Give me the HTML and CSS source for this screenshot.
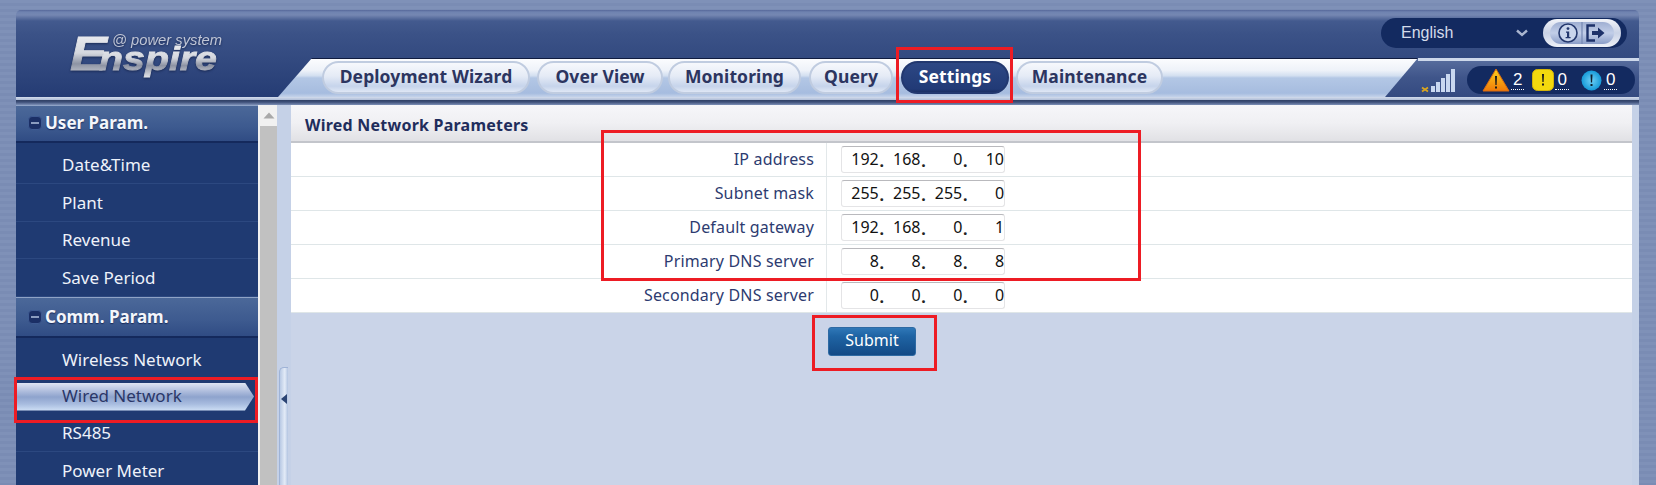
FILE: index.html
```html
<!DOCTYPE html>
<html lang="en">
<head>
<meta charset="utf-8">
<title>Wired Network Parameters</title>
<link rel="stylesheet" href="styles.css">
</head>
<body>
<div class="page">
  <div class="frame">
    <header class="top">
      <svg class="logo" width="170" height="54" viewBox="0 0 170 54">
        <defs>
          <linearGradient id="lg" x1="0" y1="0" x2="0" y2="1">
            <stop offset="0" stop-color="#f4f5f8"/>
            <stop offset="0.5" stop-color="#d4d7de"/>
            <stop offset="0.7" stop-color="#8d93a3"/>
            <stop offset="1" stop-color="#dfe1e6"/>
          </linearGradient>
        </defs>
        <text x="2" y="42" class="logo-e" fill="url(#lg)" stroke="url(#lg)" textLength="37" lengthAdjust="spacingAndGlyphs">E</text>
        <text x="31" y="42" class="logo-n" fill="url(#lg)" stroke="url(#lg)" textLength="118" lengthAdjust="spacingAndGlyphs">nspire</text>
        <text x="44" y="17" class="logo-s" textLength="110" lengthAdjust="spacingAndGlyphs">@ power system</text>
      </svg>
      <div class="lang">
        <span class="lang-name">English</span>
        <svg class="chev" width="12" height="8" viewBox="0 0 12 8"><path d="M1 1.5 L6 6 L11 1.5" fill="none" stroke="#a9b5cf" stroke-width="2.4"/></svg>
        <div class="tools">
          <svg width="78" height="28" viewBox="0 0 78 28">
            <defs>
              <linearGradient id="tg" x1="0" y1="0" x2="0" y2="1">
                <stop offset="0" stop-color="#9fafd2"/>
                <stop offset="0.5" stop-color="#c2cee8"/>
                <stop offset="1" stop-color="#8b9ec8"/>
              </linearGradient>
            </defs>
            <rect x="7" y="3" width="64" height="22" rx="11" fill="url(#tg)"/>
            <path d="M39 3V25" stroke="#7688b3" stroke-width="1.2"/>
            <circle cx="25" cy="14" r="9" fill="#c9d5ec" stroke="#24386e" stroke-width="1.6"/>
            <circle cx="25" cy="9.600" r="1.4" fill="#24386e"/>
            <path d="M23 12.5h3.2V18h1.4v1.2h-5V18h1.4v-4.300h-1z" fill="#24386e"/>
            <path d="M52 6.500h-7.500v15H52" fill="none" stroke="#1d3169" stroke-width="2.4"/>
            <path d="M49 12h6V8.500l6.500 5.500-6.500 5.500V16h-6z" fill="#1d3169"/>
          </svg>
        </div>
      </div>
    </header>

    <div class="navrow">
      <nav class="band">
        <a class="tab t1">Deployment Wizard</a>
        <a class="tab t2">Over View</a>
        <a class="tab t3">Monitoring</a>
        <a class="tab t4">Query</a>
        <a class="tab t5 on">Settings</a>
        <a class="tab t6">Maintenance</a>
      </nav>
      <div class="status">
        <svg class="signal" width="35" height="24" viewBox="0 0 35 24">
          <path d="M1 18.500l6 4M7 18.500l-6 4" stroke="#d9a520" stroke-width="1.800"/>
          <rect x="10" y="17" width="4" height="6" fill="#c9d8f0"/>
          <rect x="15" y="13" width="4" height="10" fill="#c9d8f0"/>
          <rect x="20" y="9" width="4" height="14" fill="#c9d8f0"/>
          <rect x="25" y="5" width="4" height="18" fill="#c9d8f0"/>
          <rect x="30" y="0" width="4" height="23" fill="#c9d8f0"/>
        </svg>
        <div class="alarms">
          <svg width="28" height="24" viewBox="0 0 28 24">
            <defs>
              <linearGradient id="wg" x1="0" y1="0" x2="0" y2="1">
                <stop offset="0" stop-color="#ffd21c"/>
                <stop offset="1" stop-color="#f07a08"/>
              </linearGradient>
            </defs>
            <path d="M14 1 L27 23 H1 Z" fill="url(#wg)" stroke="#d96a10" stroke-linejoin="round"/>
            <path d="M13 8h2l-.4 9h-1.200zM13 18.500h2v2h-2z" fill="#1a1a1a"/>
          </svg>
          <span class="count c1">2</span>
          <svg width="22" height="22" viewBox="0 0 22 22">
            <rect x="0.500" y="0.500" width="21" height="21" rx="5" fill="#f3d90e" stroke="#d3b30a"/>
            <path d="M10 5h2l-.4 8h-1.200zM10 14.500h2v2h-2z" fill="#1a1a1a"/>
          </svg>
          <span class="count c2">0</span>
          <svg width="21" height="21" viewBox="0 0 21 21">
            <defs>
              <radialGradient id="bg"><stop offset="0" stop-color="#6fd0f7"/><stop offset="1" stop-color="#159ad8"/></radialGradient>
            </defs>
            <circle cx="10.500" cy="10.500" r="10" fill="url(#bg)"/>
            <path d="M9.500 4.500h2l-.4 8H9.900zM9.500 14h2v2h-2z" fill="#10202f"/>
          </svg>
          <span class="count c3">0</span>
        </div>
      </div>
    </div>
    <div class="sep"></div>

    <div class="body">
      <aside class="side">
        <div class="group"><i class="minus"></i>User Param.</div>
        <a class="item first">Date&amp;Time</a>
        <a class="item">Plant</a>
        <a class="item">Revenue</a>
        <a class="item">Save Period</a>
        <div class="group g2"><i class="minus"></i>Comm. Param.</div>
        <a class="item first">Wireless Network</a>
        <a class="item sel"><span class="pill">Wired Network</span></a>
        <a class="item">RS485</a>
        <a class="item">Power Meter</a>
      </aside>
      <div class="scroll">
        <div class="scroll-btn"><svg width="12" height="7" viewBox="0 0 12 7"><path d="M6 0.500L11.500 6.500H0.500Z" fill="#a9a9a9"/></svg></div>
        <div class="scroll-thumb"></div>
      </div>
      <div class="split">
        <div class="handle"><svg width="6" height="10" viewBox="0 0 6 10"><path d="M0 5L6 0V10Z" fill="#2b4474"/></svg></div>
      </div>
      <main class="main">
        <h1 class="title">Wired Network Parameters</h1>
        <div class="rows">
          <div class="row"><label>IP address</label><div class="val"><div class="ip"><span>192</span><b>.</b><span>168</span><b>.</b><span>0</span><b>.</b><span>10</span></div></div></div>
          <div class="row"><label>Subnet mask</label><div class="val"><div class="ip"><span>255</span><b>.</b><span>255</span><b>.</b><span>255</span><b>.</b><span>0</span></div></div></div>
          <div class="row"><label>Default gateway</label><div class="val"><div class="ip"><span>192</span><b>.</b><span>168</span><b>.</b><span>0</span><b>.</b><span>1</span></div></div></div>
          <div class="row"><label>Primary DNS server</label><div class="val"><div class="ip"><span>8</span><b>.</b><span>8</span><b>.</b><span>8</span><b>.</b><span>8</span></div></div></div>
          <div class="row"><label>Secondary DNS server</label><div class="val"><div class="ip"><span>0</span><b>.</b><span>0</span><b>.</b><span>0</span><b>.</b><span>0</span></div></div></div>
        </div>
        <button class="submit">Submit</button>
      </main>
      <div class="edge"></div>
    </div>
  </div>
  <div class="mark m-settings"></div>
  <div class="mark m-ip"></div>
  <div class="mark m-submit"></div>
  <div class="mark m-wired"></div>
</div>
</body>
</html>
```
FILE: styles.css
```css
* { box-sizing: border-box; }
html, body { margin: 0; height: 100%; overflow: hidden; }
body { font-family: "Noto Sans", "Open Sans", sans-serif; }
.page {
  position: relative;
  width: 1656px;
  height: 485px;
  padding: 10px 16px 0 16px;
  overflow: hidden;
  background: repeating-linear-gradient(180deg, #7f91b8 0, #7f91b8 3px, #7a8cb4 3px, #7a8cb4 6px);
}
.frame {
  display: flex;
  flex-direction: column;
  width: 1623px;
  height: 475px;
  border-radius: 5px 5px 0 0;
  overflow: hidden;
}
.top {
  flex: none;
  height: 48px;
  display: flex;
  justify-content: space-between;
  background: linear-gradient(180deg, #56689a 0, #6f83b0 2px, #7587b2 5px, #435a8e 11px, #3b5287 24px, #334a80 48px);
}
.logo {
  flex: none;
  margin: 18px 0 -24px 52px;
  overflow: visible;
  position: relative;
  z-index: 1;
  filter: drop-shadow(0 1px 1px #1a2a55);
}
.logo-e { font: italic bold 49px "Liberation Sans", sans-serif; stroke-width: 0.8; }
.logo-n { font: italic bold 34px "Liberation Sans", sans-serif; stroke-width: 0.8; }
.logo-s { font: italic 14px "Liberation Sans", sans-serif; fill: #c0c6d6; }
.lang {
  flex: none;
  display: flex;
  align-items: center;
  width: 246px;
  height: 30px;
  margin: 8px 12px 0 0;
  padding-left: 20px;
  border-radius: 15px;
  background: #132a60;
  font: 16px "Liberation Sans", sans-serif;
  color: #d4dbea;
}
.lang-name { width: 115px; }
.chev { flex: none; }
.tools {
  display: flex;
  margin-left: 15px;
  background: linear-gradient(180deg, #f2f4f9, #c9d2e6 50%, #eef1f8);
  border-radius: 14px;
  height: 28px;
}
.navrow {
  flex: none;
  height: 39px;
  display: flex;
  background:
    linear-gradient(180deg, #5a6f9f 0, #3f558a 50%, #344a80 100%) right / 260px 100% no-repeat,
    linear-gradient(180deg, #334a80 0, #253c74 100%);
}
.band {
  flex: none;
  width: 1140px;
  margin-left: 262px;
  display: flex;
  padding: 2px 0 0 44px;
  border-top: 1px solid #101c40;
  clip-path: polygon(34px 0, 1140px 0, 1107px 100%, 0 100%);
  background: linear-gradient(180deg, #fbfcfe 0, #eef2f9 30%, #d3dff0 44%, #b3c7e5 50%, #a6bcdf 90%, #c5d3ea 100%);
}
.tab {
  flex: none;
  height: 33px;
  line-height: 27px;
  text-align: center;
  border-radius: 17px;
  border: 2px solid #c0cce0;
  background: linear-gradient(180deg, #f6f8fc 0, #e5ebf6 45%, #c6d4eb 80%, #dfe7f5 100%);
  font-size: 17.500px;
  letter-spacing: 0.1px;
  font-weight: 700;
  color: #2c3560;
  white-space: nowrap;
}
.t1 { width: 208px; }
.t2 { width: 126px; margin-left: 7px; }
.t3 { width: 133px; margin-left: 5px; }
.t4 { width: 84px; margin-left: 8px; }
.t5 { width: 108px; margin-left: 8px; }
.t6 { width: 147px; margin-left: 7px; }
.tab.on {
  border-color: #22386f;
  background: linear-gradient(180deg, #2d4784, #213a76 90%, #1a2f63);
  color: #fff;
}
.status {
  flex: 1;
  display: flex;
  align-items: center;
  padding: 2px 4px 0 3px;
  border-top: 3px solid #cdd8ea;
}
.signal { flex: none; margin-top: 2px; }
.alarms {
  display: flex;
  align-items: center;
  width: 168px;
  height: 28px;
  margin-left: auto;
  padding-left: 15px;
  border-radius: 14px;
  background: #132a60;
}
.count {
  font: 17px "Liberation Sans", sans-serif;
  color: #fff;
  line-height: 19px;
  border-bottom: 1px dotted #fff;
  padding: 0 2px;
  margin-left: 1px;
}
.c1 { margin-right: 8px; }
.c2 { margin-right: 12px; }
.c3 { margin-left: 2px; }
.sep {
  flex: none;
  height: 8px;
  background: linear-gradient(180deg, #d3dcec 0, #aebcd6 3px, #2f3f63 3px, #3d4f78 5px, #7d90b7 8px);
}
.body {
  flex: 1;
  min-height: 0;
  display: flex;
}
.side {
  flex: none;
  width: 242px;
  background: #1f3a72;
  overflow: hidden;
}
.group {
  display: flex;
  align-items: center;
  height: 38px;
  padding: 0 0 3px 12px;
  border-top: 1px solid #8fa3c6;
  border-bottom: 2px solid #14295c;
  background: linear-gradient(180deg, #4b6899, #3d5a8f 60%, #304c84);
  font-size: 17px;
  font-weight: 700;
  color: #f4f6fb;
  text-shadow: 0 1px 1px #1a2c5c;
}
.group.g2 { height: 41px; padding-top: 2px; }
.minus {
  flex: none;
  position: relative;
  width: 14px;
  height: 14px;
  margin: 2px 3px 0 0;
  border-radius: 4px;
  background: #1b2f66;
  border: 1px solid #3e5a92;
}
.minus::after {
  content: "";
  position: absolute;
  left: 2px;
  right: 2px;
  top: 5px;
  height: 2px;
  background: #8b9cc0;
}
.item {
  display: flex;
  align-items: center;
  height: 37.500px;
  padding-left: 46px;
  border-bottom: 1px solid #2c4880;
  font-size: 17px;
  color: #eef2fa;
}
.item.first { height: 41px; padding-top: 3px; }
.item.sel { height: 36px; padding-left: 0; border-bottom: 0; }
.pill {
  display: flex;
  align-items: center;
  width: 238px;
  height: 28px;
  padding: 0 0 2px 46px;
  clip-path: polygon(0 0, 229px 0, 100% 50%, 229px 100%, 0 100%);
  background: linear-gradient(180deg, #dfe5f4 0, #c6d0e8 15%, #8ea3cd 50%, #a8bcdf 75%, #cfe0f6 100%);
  color: #2a3768;
}
.scroll {
  flex: none;
  width: 19px;
  display: flex;
  flex-direction: column;
  padding-left: 2px;
  background: #f1f1f1;
}
.scroll-btn {
  flex: none;
  height: 21px;
  display: flex;
  justify-content: center;
  align-items: center;
}
.scroll-thumb { flex: 1; background: #c1c1c1; }
.split {
  flex: none;
  width: 14px;
  padding: 262px 0 0 2px;
  background: #c5d1e7;
}
.handle {
  width: 9px;
  height: 130px;
  display: flex;
  align-items: center;
  padding: 0 0 66px 1px;
  border: 1px solid #9fb3d6;
  border-right-width: 0;
  border-radius: 5px 0 0 5px;
  background: linear-gradient(90deg, #b8c9e4, #e3ebf7 60%, #b2c4e1);
}
.main {
  flex: none;
  width: 1341px;
  background: #cad4e8;
}
.title {
  display: flex;
  align-items: center;
  height: 38px;
  margin: 0;
  padding: 3px 0 0 14px;
  border-bottom: 2px solid #c3c5cb;
  background: linear-gradient(180deg, #f6f6f9, #f0f0f3 50%, #e1e1e5);
  font-size: 16px;
  letter-spacing: 0.23px;
  font-weight: 700;
  color: #1f2d5c;
}
.rows { background: #fff; }
.row {
  display: flex;
  height: 34px;
  border-bottom: 1px solid #dfe6e8;
}
.row label {
  flex: none;
  width: 536px;
  padding: 0 12px 1px 0;
  display: flex;
  align-items: center;
  justify-content: flex-end;
  border-right: 1px solid #e3e8ea;
  font-size: 16px;
  letter-spacing: 0.17px;
  color: #2d3b70;
}
.val { padding: 3px 0 0 14px; }
.ip {
  display: flex;
  width: 164px;
  height: 27px;
  padding-left: 1px;
  border: 1px solid #e4e4e6;
  border-top-color: #b9b9bd;
  border-radius: 3px;
  font-size: 16px;
  line-height: 25px;
  color: #111;
}
.ip span { width: 36px; text-align: right; }
.ip b { width: 6px; font-weight: 700; line-height: 28px; text-align: center; color: #222; }
.submit {
  display: block;
  width: 88px;
  height: 29px;
  margin: 14px 0 0 537px;
  padding: 0 0 3px;
  border: 1px solid #2e6aa3;
  border-radius: 3px;
  background: linear-gradient(180deg, #2f78b8 0, #1f64a4 30%, #134a86 100%);
  font: 16px "Noto Sans", sans-serif;
  color: #fff;
}
.edge { flex: 1; background: #c5d1e7; }
.mark {
  position: absolute;
  border: 3px solid #ed1c24;
}
.m-settings { left: 896px; top: 47px; width: 117px; height: 56px; }
.m-ip { left: 601px; top: 130px; width: 540px; height: 151px; }
.m-submit { left: 812px; top: 315px; width: 125px; height: 56px; }
.m-wired { left: 14px; top: 377px; width: 244px; height: 46px; }
```
